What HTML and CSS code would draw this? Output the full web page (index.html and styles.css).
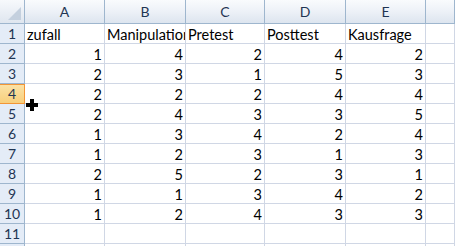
FILE: index.html
```html
<!DOCTYPE html>
<html lang="de">
<head>
    <meta charset="UTF-8">
    <title>Mappe1</title>
    <link rel="stylesheet" href="styles.css">
</head>
<body>
    <div class="sheet">
        <div class="grid">
            <div class="corner"><span class="corner-tri"></span></div>
            <div class="colhead">A</div>
            <div class="colhead">B</div>
            <div class="colhead">C</div>
            <div class="colhead">D</div>
            <div class="colhead">E</div>
            <div class="colhead"></div>

            <div class="rowhead">1</div>
            <div class="cell txt">zufall</div>
            <div class="cell txt">Manipulation</div>
            <div class="cell txt">Pretest</div>
            <div class="cell txt">Posttest</div>
            <div class="cell txt">Kausfrage</div>
            <div class="cell"></div>

            <div class="rowhead">2</div>
            <div class="cell num">1</div><div class="cell num">4</div><div class="cell num">2</div><div class="cell num">4</div><div class="cell num">2</div><div class="cell"></div>

            <div class="rowhead">3</div>
            <div class="cell num">2</div><div class="cell num">3</div><div class="cell num">1</div><div class="cell num">5</div><div class="cell num">3</div><div class="cell"></div>

            <div class="rowhead active">4</div>
            <div class="cell num">2</div><div class="cell num">2</div><div class="cell num">2</div><div class="cell num">4</div><div class="cell num">4</div><div class="cell"></div>

            <div class="rowhead">5</div>
            <div class="cell num">2</div><div class="cell num">4</div><div class="cell num">3</div><div class="cell num">3</div><div class="cell num">5</div><div class="cell"></div>

            <div class="rowhead">6</div>
            <div class="cell num">1</div><div class="cell num">3</div><div class="cell num">4</div><div class="cell num">2</div><div class="cell num">4</div><div class="cell"></div>

            <div class="rowhead">7</div>
            <div class="cell num">1</div><div class="cell num">2</div><div class="cell num">3</div><div class="cell num">1</div><div class="cell num">3</div><div class="cell"></div>

            <div class="rowhead">8</div>
            <div class="cell num">2</div><div class="cell num">5</div><div class="cell num">2</div><div class="cell num">3</div><div class="cell num">1</div><div class="cell"></div>

            <div class="rowhead">9</div>
            <div class="cell num">1</div><div class="cell num">1</div><div class="cell num">3</div><div class="cell num">4</div><div class="cell num">2</div><div class="cell"></div>

            <div class="rowhead">10</div>
            <div class="cell num">1</div><div class="cell num">2</div><div class="cell num">4</div><div class="cell num">3</div><div class="cell num">3</div><div class="cell"></div>

            <div class="rowhead">11</div>
            <div class="cell"></div><div class="cell"></div><div class="cell"></div><div class="cell"></div><div class="cell"></div><div class="cell"></div>

            <div class="rowhead"></div>
            <div class="cell"></div><div class="cell"></div><div class="cell"></div><div class="cell"></div><div class="cell"></div><div class="cell"></div>
        </div>

        <!-- mouse cursor over the sheet -->
        <svg class="cursor" width="12" height="12" viewBox="0 0 12 12">
            <path d="M4 0h4v4h4v4h-4v4h-4v-4h-4v-4h4z" fill="#000"/>
        </svg>
    </div>
</body>
</html>
```

FILE: styles.css
```css
/* Base */
body {
    margin: 0;
    background: #fff;
    font-family: Lato, "Liberation Sans", sans-serif;
    overflow: hidden;
}

.sheet {
    position: relative;
    width: 455px;
    height: 246px;
    overflow: hidden;
}

.grid {
    display: grid;
    grid-template-columns: 25px 80px 81px 79px 81px 80px 1fr;
    grid-template-rows: 24px repeat(12, 20px);
}

/* Header cells */
.corner {
    position: relative;
    background: linear-gradient(#f7f9fc, #dfe6ef);
    border-right: 1px solid #9eb6ce;
    border-bottom: 1px solid #9eb6ce;
}

.corner-tri {
    position: absolute;
    right: 3px;
    bottom: 3px;
    width: 0;
    height: 0;
    border-left: 13px solid transparent;
    border-bottom: 13px solid #c4d0de;
}

.colhead {
    background: linear-gradient(#f9fbfd 0%, #eef2f8 45%, #dde5ef 100%);
    border-right: 1px solid #9eb6ce;
    border-bottom: 1px solid #9eb6ce;
    color: #1f3553;
    font-size: 14px;
    text-align: center;
    line-height: 23px;
}

.rowhead {
    background: #e4ecf7;
    border-right: 1px solid #9eb6ce;
    border-bottom: 1px solid #9eb6ce;
    color: #1f3553;
    font-size: 14px;
    text-align: center;
    line-height: 20px;
}

.rowhead.active {
    background: linear-gradient(#fbe3a8, #f8cf7c);
    border-right-color: #f29536;
    border-bottom-color: #f29536;
    box-shadow: inset 0 1px 0 #f29536;
}

/* Data cells */
.cell {
    border-right: 1px solid #d0d7e5;
    border-bottom: 1px solid #d0d7e5;
    color: #000;
    font-size: 14.5px;
    line-height: 21px;
    white-space: nowrap;
    overflow: hidden;
}

.txt {
    padding-left: 2px;
}

.num {
    text-align: right;
    padding-right: 2px;
}

.cursor {
    position: absolute;
    left: 26px;
    top: 99px;
}
```
